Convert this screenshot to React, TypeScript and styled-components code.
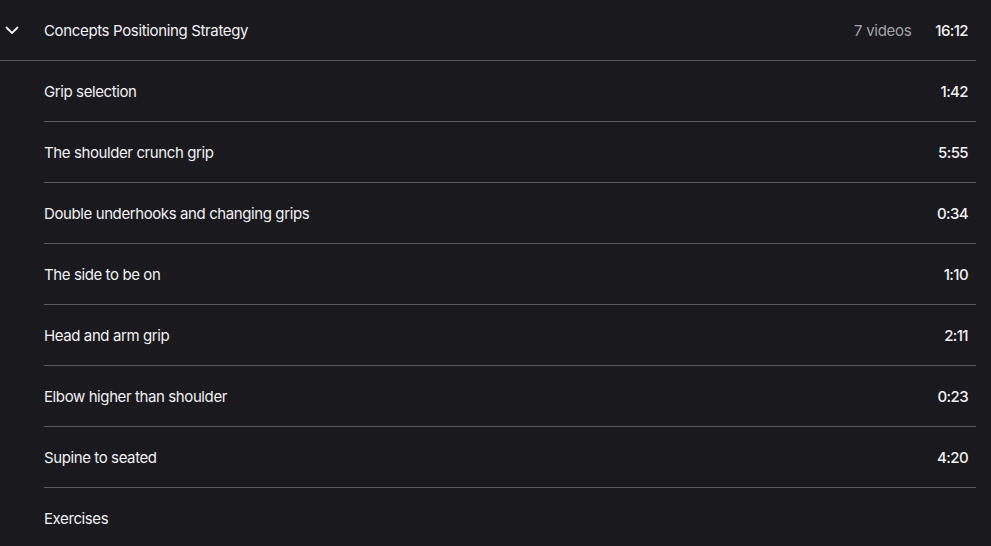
import React from 'react';
import styled, { createGlobalStyle } from 'styled-components';

const GlobalStyle = createGlobalStyle`
  html, body {
    margin: 0;
    padding: 0;
    background: #1a191e;
  }
  body {
    font-family: Inter, "Noto Sans", sans-serif;
    color: #f1f1f3;
  }
`;

const Section = styled.section`
  width: 991px;
  height: 546px;
  padding-right: 15px;
  box-sizing: border-box;
  background: #1a191e;
  overflow: hidden;
`;

const Header = styled.div`
  display: flex;
  align-items: center;
  height: 60px;
  border-bottom: 1px solid #5c5b60;
  font-size: 15px;
`;

const ChevronCell = styled.div`
  width: 44px;
  display: flex;
  align-items: center;
  padding-left: 4px;
  box-sizing: border-box;
`;

const Title = styled.div`
  flex: 1;
  letter-spacing: -0.35px;
`;

const Count = styled.span`
  color: #a3a2a8;
  margin-right: 24px;
  letter-spacing: -0.3px;
`;

const Duration = styled.span`
  font-weight: 500;
  padding-right: 8px;
  letter-spacing: -0.6px;
`;

const List = styled.ul`
  list-style: none;
  margin: 0 0 0 44px;
  padding: 0;
`;

const Lesson = styled.li<{ $last?: boolean }>`
  display: flex;
  align-items: center;
  justify-content: space-between;
  height: 60px;
  font-size: 15px;
  border-bottom: ${(p) => (p.$last ? 'none' : '1px solid #5c5b60')};
`;

const LessonName = styled.span`
  letter-spacing: -0.4px;
`;

const lessons = [
  { name: 'Grip selection', time: '1:42' },
  { name: 'The shoulder crunch grip', time: '5:55' },
  { name: 'Double underhooks and changing grips', time: '0:34' },
  { name: 'The side to be on', time: '1:10' },
  { name: 'Head and arm grip', time: '2:11' },
  { name: 'Elbow higher than shoulder', time: '0:23' },
  { name: 'Supine to seated', time: '4:20' },
  { name: 'Exercises', time: '' },
];

const App: React.FC = () => (
  <>
    <GlobalStyle />
    <Section>
      <Header>
        <ChevronCell>
          <svg width="16" height="16" viewBox="0 0 16 16" fill="none">
            <path d="M2.5 5.5L8 11L13.5 5.5" stroke="#f1f1f3" strokeWidth="1.8" strokeLinecap="round" strokeLinejoin="round" />
          </svg>
        </ChevronCell>
        <Title>Concepts Positioning Strategy</Title>
        <Count>7 videos</Count>
        <Duration>16:12</Duration>
      </Header>
      <List>
        {lessons.map((l, i) => (
          <Lesson key={l.name} $last={i === lessons.length - 1}>
            <LessonName>{l.name}</LessonName>
            {l.time && <Duration>{l.time}</Duration>}
          </Lesson>
        ))}
      </List>
    </Section>
  </>
);

export default App;
